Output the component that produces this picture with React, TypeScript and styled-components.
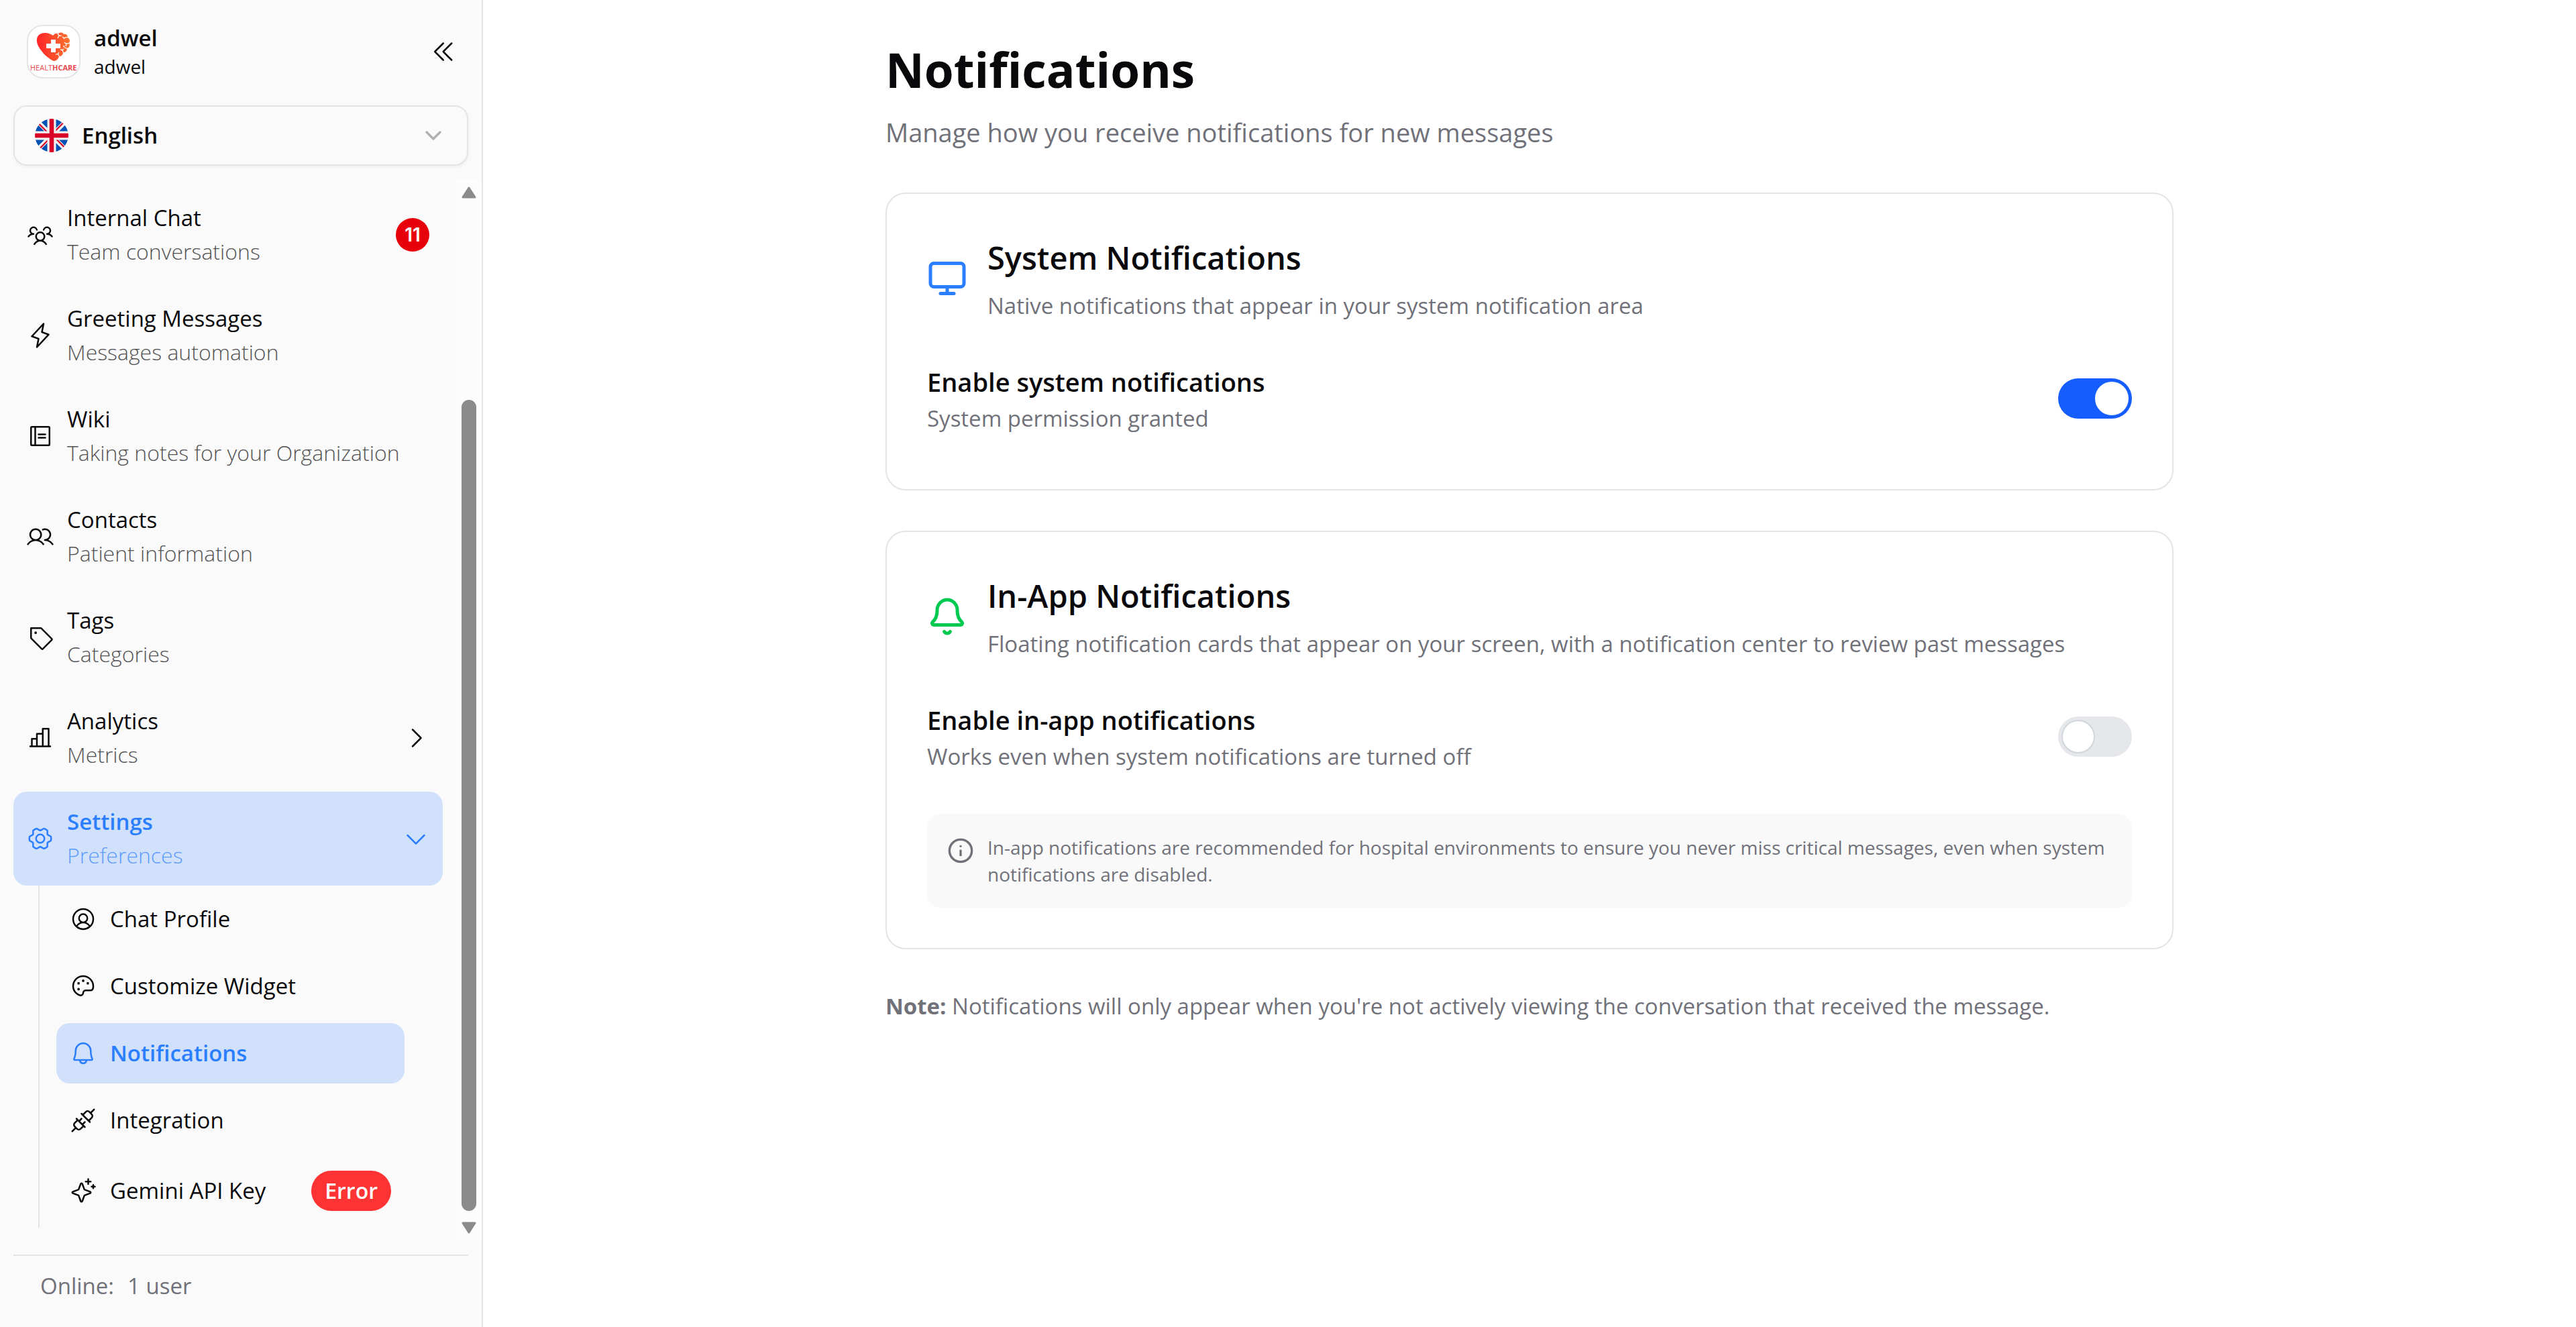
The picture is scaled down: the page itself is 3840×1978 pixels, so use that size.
import React, { useState } from "react";
import styled, { createGlobalStyle } from "styled-components";
import { Bell, ChevronDown, Info, Monitor } from "lucide-react";
import {
  PiBell,
  PiCaretDoubleLeft,
  PiCaretDown,
  PiCaretRight,
  PiChartBar,
  PiGearSix,
  PiLightning,
  PiNotebook,
  PiPalette,
  PiPlugs,
  PiSparkle,
  PiTag,
  PiUserCircle,
  PiUsers,
  PiUsersThree,
} from "react-icons/pi";

const color = {
  ink: "#09090b",
  muted: "#71717a",
  line: "#e4e4e4",
  side: "#fafafa",
  accent: "#2b7fff",
  accentSoft: "#d1e1fb",
};

const GlobalStyle = createGlobalStyle`
  *, *::before, *::after { box-sizing: border-box; }
  body {
    margin: 0;
    background: #ffffff;
    color: ${color.ink};
    font-family: "Segoe UI", "Open Sans", "Noto Sans", sans-serif;
    font-size: 33px;
    line-height: 50px;
  }
  h1, h2, p, ul { margin: 0; padding: 0; }
  ul { list-style: none; }
  a { color: inherit; text-decoration: none; }
  button { font: inherit; color: inherit; background: none; border: 0; padding: 0; text-align: left; cursor: pointer; }
  svg { display: block; flex: none; }
`;

const Shell = styled.div`
  display: grid;
  grid-template-columns: 720px minmax(0, 1fr);
  min-height: 100vh;
`;

const Sidebar = styled.aside`
  display: flex;
  flex-direction: column;
  height: 100vh;
  background: ${color.side};
  border-right: 2px solid ${color.line};
`;

const Brand = styled.header`
  display: flex;
  align-items: center;
  gap: 20px;
  padding: 35px 36px 38px 40px;
`;

const LogoFrame = styled.span`
  width: 80px;
  height: 80px;
  overflow: hidden;
  background: #ffffff;
  border: 2px solid ${color.line};
  border-radius: 24px;
`;

const BrandText = styled.div`
  flex: 1;
  display: flex;
  flex-direction: column;
`;

const BrandName = styled.strong`
  font-weight: 600;
  line-height: 44px;
`;

const BrandSub = styled.span`
  font-size: 28px;
  line-height: 40px;
`;

const LanguageButton = styled.button`
  display: flex;
  align-items: center;
  gap: 20px;
  height: 90px;
  margin: 0 20px 20px;
  padding: 0 30px;
  border: 2px solid ${color.line};
  border-radius: 20px;
  box-shadow: 0 2px 5px rgba(0, 0, 0, 0.05);
  font-weight: 600;

  svg:last-child { margin-left: auto; opacity: 0.3; }
`;

const ScrollArea = styled.div`
  flex: 1;
  min-height: 0;
  display: flex;
  margin-bottom: 20px;
`;

const Nav = styled.nav`
  flex: 1;
  overflow: hidden;
  padding: 13px 20px 20px;
`;

const NavList = styled.ul`
  display: flex;
  flex-direction: column;
  gap: 10px;
`;

const NavLink = styled.a<{ $active?: boolean }>`
  display: flex;
  align-items: center;
  gap: 20px;
  padding: 20px;
  border-radius: 20px;
  color: ${(p) => (p.$active ? color.accent : color.ink)};
  background: ${(p) => (p.$active ? color.accentSoft : "transparent")};
  font-weight: ${(p) => (p.$active ? 600 : 400)};
`;

const NavText = styled.span`
  flex: 1;
  display: flex;
  flex-direction: column;
  white-space: nowrap;
`;

const NavHint = styled.span`
  font-size: 32px;
  font-weight: 300;
  opacity: 0.7;
`;

const CountBadge = styled.span`
  width: 50px;
  height: 50px;
  border-radius: 50%;
  background: #e7000b;
  color: #ffffff;
  font-family: Inter, "Open Sans", sans-serif;
  font-size: 28px;
  font-weight: 600;
  text-align: center;
`;

const SubList = styled.ul`
  display: flex;
  flex-direction: column;
  gap: 10px;
  margin: 0 37px;
  padding: 5px 20px 5px 25px;
  border-left: 2px solid ${color.line};
`;

const SubLink = styled(NavLink)`
  white-space: nowrap;
`;

const ErrorBadge = styled.span`
  margin-left: auto;
  padding: 5px 20px;
  border-radius: 30px;
  background: #ff3333;
  color: #ffffff;
  font-size: 32px;
  font-weight: 600;
`;

const ScrollBar = styled.div`
  display: flex;
  flex-direction: column;
  align-items: center;
  width: 38px;
  padding: 11px 0;
  background: #fcfcfc;
`;

const ScrollThumb = styled.div`
  flex: 1;
  width: 22px;
  margin: 300px 0 16px;
  border-radius: 11px;
  background: #8b8b8b;
`;

const SideFooter = styled.footer`
  display: flex;
  gap: 20px;
  margin: 0 20px;
  padding: 20px 40px 36px;
  border-top: 2px solid ${color.line};
  color: ${color.muted};
`;

const Main = styled.main`
  padding: 59px 60px;
`;

const Page = styled.div`
  display: flex;
  flex-direction: column;
  gap: 60px;
  max-width: 1920px;
  margin: 0 auto;
`;

const PageHeader = styled.header`
  display: flex;
  flex-direction: column;
  gap: 18px;
`;

const PageTitle = styled.h1`
  font-size: 71px;
  line-height: 90px;
  font-weight: 700;
`;

const PageLead = styled.p`
  color: ${color.muted};
  font-size: 38px;
  line-height: 60px;
`;

const Card = styled.section`
  display: flex;
  flex-direction: column;
  padding: 60px;
  border: 2px solid ${color.line};
  border-radius: 30px;
`;

const CardHeader = styled.div`
  display: flex;
  align-items: center;
  gap: 30px;
  margin-bottom: 58px;
`;

const CardHeading = styled.div`
  display: flex;
  flex-direction: column;
  gap: 12px;
`;

const CardTitle = styled.h2`
  font-size: 47px;
  line-height: 70px;
  font-weight: 600;
`;

const Muted = styled.p`
  color: ${color.muted};
`;

const SettingRow = styled.div`
  display: flex;
  align-items: center;
  justify-content: space-between;
  padding-bottom: 20px;
`;

const SettingLabel = styled.label`
  display: block;
  font-size: 38px;
  line-height: 60px;
  font-weight: 600;
`;

const Switch = styled.input`
  appearance: none;
  flex: none;
  display: flex;
  width: 110px;
  height: 60px;
  margin: 0;
  padding: 5px;
  border-radius: 30px;
  background: #e5e7eb;
  cursor: pointer;

  &::before {
    content: "";
    width: 50px;
    height: 50px;
    border: 2px solid #d1d5dc;
    border-radius: 50%;
    background: #ffffff;
  }
  &:checked { background: #155dfc; justify-content: flex-end; }
  &:checked::before { border-color: #ffffff; }
`;

const Callout = styled.div`
  display: flex;
  gap: 20px;
  margin-top: 40px;
  padding: 30px;
  border-radius: 20px;
  background: #f9f9f9;
  color: ${color.muted};
  font-size: 28px;
  line-height: 40px;

  svg { margin-top: 5px; }
`;

const HealthLogo = () => (
  <svg width="76" height="76" viewBox="0 0 76 76" role="img" aria-label="Healthcare">
    <defs>
      <linearGradient id="heart" x1="0" x2="1">
        <stop offset="0" stopColor="#ff2429" />
        <stop offset="1" stopColor="#fb7430" />
      </linearGradient>
    </defs>
    <path
      d="M37 14c2-3 5-4 8-3 3-2 6-2 8 1 4-1 6 2 6 5 3 2 4 5 2 8 2 4 0 7-3 8 0 4-2 6-6 6 0 4-3 6-6 6-1 4-4 7-8 7-6-3-13-8-18-15-5-6-8-13-7-18 1-6 6-9 12-9 5 0 9 2 12 4z"
      fill="url(#heart)"
    />
    <path d="M34 20h7v6h7v7h-7v6h-7v-6h-7v-7h7z" fill="#ffffff" />
    <path
      d="M44 11c1 3 3 4 6 3M46 14l-2 4M59 17c-3-1-5 0-6 2M54 18l-3-2M61 25c-3 2-6 1-7-1M57 26l-1 4M58 33c-3 0-5-2-5-4M52 39c0-3-2-4-4-4M50 36l3-2M46 45c0-3-2-4-5-3M44 42l2-3"
      fill="none"
      stroke="#ffffff"
      strokeWidth="1.3"
    />
    <text x="3" y="66" fontFamily="Open Sans, sans-serif" fontSize="11" fill="#e8474c">
      HEALT<tspan fontWeight="700">HCARE</tspan>
    </text>
  </svg>
);

const UkFlag = () => (
  <svg width="50" height="50" viewBox="0 0 512 512" aria-hidden="true">
    <clipPath id="round"><circle cx="256" cy="256" r="256" /></clipPath>
    <g clipPath="url(#round)">
      <path fill="#f0f0f0" d="M0 0h512v512H0z" />
      <path
        fill="#0052b4"
        d="M52.9 100.1A255 255 0 0 0 8.8 189.2H142zM503.2 189.2a255 255 0 0 0-44.1-89.1L370 189.2zM8.8 322.8a255 255 0 0 0 44.1 89.1l89.1-89.1zM411.9 52.9A255 255 0 0 0 322.8 8.8V142zM100.1 459.1a255 255 0 0 0 89.1 44.1V370zM189.2 8.8a255 255 0 0 0-89.1 44.1l89.1 89.1zM322.8 503.2a255 255 0 0 0 89.1-44.1L322.8 370zM370 322.8l89.1 89.1a255 255 0 0 0 44.1-89.1z"
      />
      <path fill="#d80027" d="M0 222.6h512v66.8H0zM222.6 0h66.8v512h-66.8z" />
      <path
        fill="#d80027"
        d="M322.8 322.8L437 437a257 257 0 0 0 15-16.400l-97.800-97.800zM189.200 322.800L75 437a257 257 0 0 0 16.400 15l97.800-97.800zM189.200 189.200L75 75a257 257 0 0 0-15 16.400l97.800 97.800zM322.800 189.200L437 75a257 257 0 0 0-16.400-15l-97.800 97.800z"
      />
    </g>
  </svg>
);

const ScrollArrow = ({ down }: { down?: boolean }) => (
  <svg width="24" height="18" viewBox="0 0 24 18" aria-hidden="true">
    <path
      d={down ? "M3 2h18L12 16z" : "M3 16h18L12 2z"}
      fill="#8b8b8b"
      stroke="#8b8b8b"
      strokeWidth="3"
      strokeLinejoin="round"
    />
  </svg>
);

const menu = [
  { title: "Internal Chat", hint: "Team conversations", Icon: PiUsersThree, count: 11 },
  { title: "Greeting Messages", hint: "Messages automation", Icon: PiLightning },
  { title: "Wiki", hint: "Taking notes for your Organization", Icon: PiNotebook },
  { title: "Contacts", hint: "Patient information", Icon: PiUsers },
  { title: "Tags", hint: "Categories", Icon: PiTag },
  { title: "Analytics", hint: "Metrics", Icon: PiChartBar, more: true },
];

const settings = [
  { title: "Chat Profile", Icon: PiUserCircle },
  { title: "Customize Widget", Icon: PiPalette },
  { title: "Notifications", Icon: PiBell, active: true },
  { title: "Integration", Icon: PiPlugs },
  { title: "Gemini API Key", Icon: PiSparkle, error: "Error" },
];

type SettingProps = { id: string; label: string; hint: string; initial: boolean };

const Setting = ({ id, label, hint, initial }: SettingProps) => {
  const [on, setOn] = useState(initial);
  return (
    <SettingRow>
      <div>
        <SettingLabel htmlFor={id}>{label}</SettingLabel>
        <Muted>{hint}</Muted>
      </div>
      <Switch id={id} type="checkbox" role="switch" checked={on} onChange={() => setOn(!on)} />
    </SettingRow>
  );
};

export default function App() {
  return (
    <>
      <GlobalStyle />
      <Shell>
        <Sidebar>
          <Brand>
            <LogoFrame><HealthLogo /></LogoFrame>
            <BrandText>
              <BrandName>adwel</BrandName>
              <BrandSub>adwel</BrandSub>
            </BrandText>
            <button type="button" aria-label="Collapse sidebar"><PiCaretDoubleLeft size={40} /></button>
          </Brand>
          <LanguageButton type="button">
            <UkFlag />
            English
            <ChevronDown size={40} />
          </LanguageButton>
          <ScrollArea>
            <Nav>
              <NavList>
                {menu.map(({ title, hint, Icon, count, more }) => (
                  <li key={title}>
                    <NavLink href="#">
                      <Icon size={40} />
                      <NavText>
                        {title}
                        <NavHint>{hint}</NavHint>
                      </NavText>
                      {count && <CountBadge>{count}</CountBadge>}
                      {more && <PiCaretRight size={40} />}
                    </NavLink>
                  </li>
                ))}
                <li>
                  <NavLink href="#" $active>
                    <PiGearSix size={40} />
                    <NavText>
                      Settings
                      <NavHint>Preferences</NavHint>
                    </NavText>
                    <PiCaretDown size={40} />
                  </NavLink>
                  <SubList>
                    {settings.map(({ title, Icon, active, error }) => (
                      <li key={title}>
                        <SubLink href="#" $active={active}>
                          <Icon size={40} />
                          {title}
                          {error && <ErrorBadge>{error}</ErrorBadge>}
                        </SubLink>
                      </li>
                    ))}
                  </SubList>
                </li>
              </NavList>
            </Nav>
            <ScrollBar aria-hidden="true">
              <ScrollArrow />
              <ScrollThumb />
              <ScrollArrow down />
            </ScrollBar>
          </ScrollArea>
          <SideFooter>
            <span>Online:</span>
            <span>1 user</span>
          </SideFooter>
        </Sidebar>
        <Main>
          <Page>
            <PageHeader>
              <PageTitle>Notifications</PageTitle>
              <PageLead>Manage how you receive notifications for new messages</PageLead>
            </PageHeader>
            <Card>
              <CardHeader>
                <Monitor size={60} color={color.accent} />
                <CardHeading>
                  <CardTitle>System Notifications</CardTitle>
                  <Muted>Native notifications that appear in your system notification area</Muted>
                </CardHeading>
              </CardHeader>
              <Setting
                id="system-notifications"
                label="Enable system notifications"
                hint="System permission granted"
                initial
              />
            </Card>
            <Card>
              <CardHeader>
                <Bell size={60} color="#00c950" />
                <CardHeading>
                  <CardTitle>In-App Notifications</CardTitle>
                  <Muted>
                    Floating notification cards that appear on your screen, with a notification center to review past
                    messages
                  </Muted>
                </CardHeading>
              </CardHeader>
              <Setting
                id="in-app-notifications"
                label="Enable in-app notifications"
                hint="Works even when system notifications are turned off"
                initial={false}
              />
              <Callout>
                <Info size={40} />
                <p>
                  In-app notifications are recommended for hospital environments to ensure you never miss critical
                  messages, even when system notifications are disabled.
                </p>
              </Callout>
            </Card>
            <Muted>
              <strong>Note:</strong> Notifications will only appear when you're not actively viewing the conversation
              that received the message.
            </Muted>
          </Page>
        </Main>
      </Shell>
    </>
  );
}
